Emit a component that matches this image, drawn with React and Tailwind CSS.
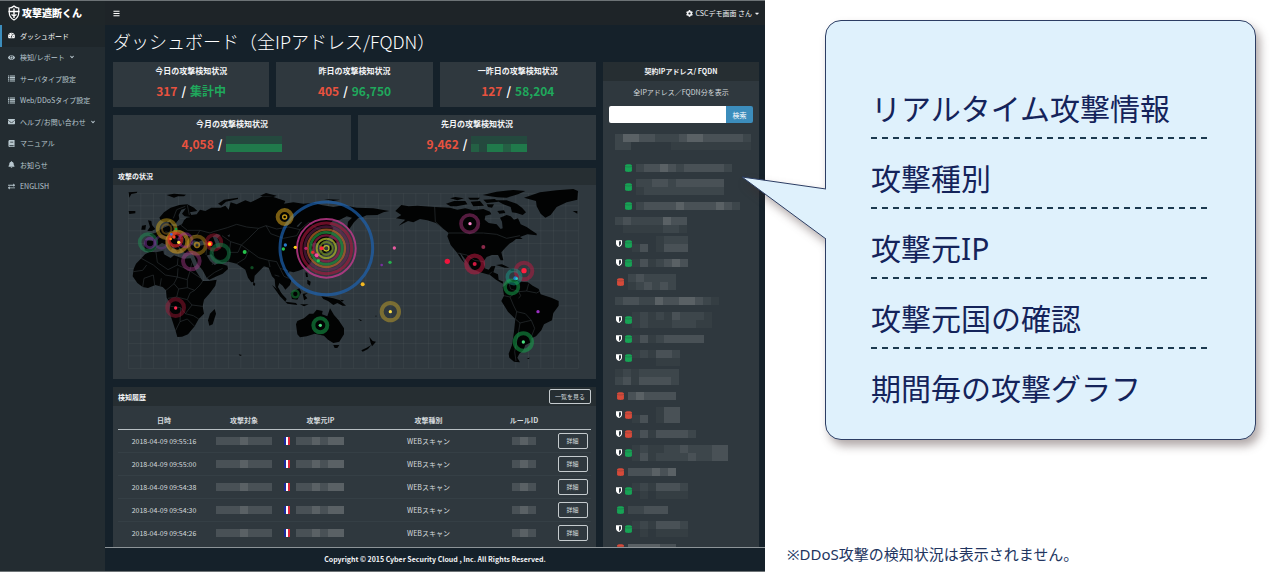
import React, { useState } from "react";
import {
  FaAngleDown,
  FaBars,
  FaBell,
  FaBook,
  FaCaretDown,
  FaCog,
  FaEnvelope,
  FaExchangeAlt,
  FaEye,
  FaTachometerAlt,
} from "react-icons/fa";

const ListIcon = ({ className }) => (
  <svg viewBox="0 0 16 14" className={className} fill="currentColor">
    <path d="M0 0h2.500v2.500H0z M4 0h12v2.500H4z M0 3.800h2.500v2.500H0z M4 3.800h12v2.500H4z M0 7.600h2.500v2.500H0z M4 7.600h12v2.500H4z M0 11.400h2.500v2.500H0z M4 11.400h12v2.500H4z" />
  </svg>
);

const DatabaseIcon = ({ className }) => (
  <svg viewBox="0 0 12 14" className={className} fill="currentColor">
    <path d="M0 2.200 C0 -0.400 12 -0.400 12 2.200 V11.800 C12 14.600 0 14.600 0 11.800 Z" />
    <path
      d="M0 4 C2 5.600 10 5.600 12 4"
      fill="none"
      stroke="#2f383e"
      strokeOpacity="0.500"
      strokeWidth="1"
    />
  </svg>
);

const ShieldIcon = ({ className }) => (
  <svg viewBox="0 0 12 14" className={className}>
    <path d="M0 0.500 H12 V7 C12 10.500 9 12.600 6 14 C3 12.600 0 10.500 0 7 Z" fill="#ffffff" />
    <path d="M6 2.500 H10 V7 C10 9 8.500 10.500 6 11.800 Z" fill="#2f383e" />
  </svg>
);

const menuItems = [
  { label: "ダッシュボード", icon: FaTachometerAlt, active: true },
  { label: "検知/レポート", icon: FaEye, sub: true },
  { label: "サーバタイプ設定", icon: ListIcon },
  { label: "Web/DDoSタイプ設定", icon: ListIcon },
  { label: "ヘルプ/お問い合わせ", icon: FaEnvelope, sub: true },
  { label: "マニュアル", icon: FaBook },
  { label: "お知らせ", icon: FaBell },
  { label: "ENGLISH", icon: FaExchangeAlt },
];

const dailyStats = [
  { title: "今日の攻撃検知状況", detected: "317", total: "集計中" },
  { title: "昨日の攻撃検知状況", detected: "405", total: "96,750" },
  { title: "一昨日の攻撃検知状況", detected: "127", total: "58,204" },
];

const monthlyStats = [
  { title: "今月の攻撃検知状況", detected: "4,058", masked: ["5555555", "6666666"] },
  { title: "先月の攻撃検知状況", detected: "9,462", masked: ["5555555", "7566766"] },
];

const history = [
  "2018-04-09 09:55:16",
  "2018-04-09 09:55:00",
  "2018-04-09 09:54:38",
  "2018-04-09 09:54:30",
  "2018-04-09 09:54:26",
];

// Masked server names. Every digit is one block, see blockColors
const servers = [
  { type: "indent", color: "green", rows: ["233432333332"] },
  { type: "indent", color: "green", rows: ["22332333333", "12222222222"] },
  { type: "indent", color: "green", rows: ["2333343333432"] },
  { type: "heading", rows: ["232222433", "011111221"] },
  { type: "shield", color: "green", rows: ["0001222", "1301333"] },
  { type: "shield", color: "green", rows: ["1312343"] },
  { type: "plain", color: "red", rows: ["232222", "123232"] },
  { type: "heading", rows: ["2332243344321"] },
  { type: "shield", color: "green", rows: ["1212132221", "1211122211"] },
  { type: "shield", color: "green", rows: ["131233333"] },
  { type: "shield", color: "green", rows: ["121332", "000111"] },
  { type: "heading", rows: ["12122222", "23133332"] },
  { type: "plain", color: "red", rows: ["343333"] },
  { type: "shield", color: "red", rows: ["000133", "130133"] },
  { type: "shield", color: "red", rows: ["13133332"] },
  { type: "shield", color: "green", rows: ["121122322233", "131222232233"] },
  { type: "plain", color: "red", rows: ["333434"] },
  { type: "shield", color: "green", rows: ["1213332", "0101111"] },
  { type: "plain", color: "green", rows: ["22333"] },
  { type: "shield", color: "green", rows: ["1213332", "0101111"] },
  { type: "plain", color: "red", rows: ["444433"] },
];

const features = [
  "リアルタイム攻撃情報",
  "攻撃種別",
  "攻撃元IP",
  "攻撃元国の確認",
  "期間毎の攻撃グラフ",
];

const blockColors = [
  "bg-transparent",
  "bg-[#353e43]",
  "bg-[#3d464b]",
  "bg-[#495156]",
  "bg-[#5a6165]",
  "bg-[#24493e]",
  "bg-[#207a4b]",
  "bg-[#246044]",
];

const Mosaic = ({ rows }) => (
  <span className="flex flex-col">
    {rows.map((row, i) => (
      <span key={i} className="flex">
        {row.split("").map((n, j) => (
          <span key={j} className={`h-2 w-2 ${blockColors[n]}`} />
        ))}
      </span>
    ))}
  </span>
);

const Logo = () => (
  <a href="#" className="flex h-6 items-center gap-0.5 bg-[#1f2629] pl-2 text-white">
    <svg viewBox="0 0 24 32" className="h-4 w-3" fill="none" stroke="currentColor">
      <path
        d="M12 2 C9 5 6 6 2.500 6 V15 C2.500 22 6 27 12 30 C18 27 21.500 22 21.500 15 V6 C18 6 15 5 12 2 Z"
        strokeWidth="2.400"
      />
      <path d="M12 7 V26 M1 13 H23 M7 19 L12 22 L17 19" strokeWidth="2.800" />
    </svg>
    <span className="text-[10px] leading-4 font-black whitespace-nowrap">攻撃遮断くん</span>
  </a>
);

const StatCard = ({ title, detected, total, masked }) => (
  <div className="flex-1 bg-[#2f383e] pt-0.5 pb-1.5 text-center font-bold">
    <h2 className="text-[8px] leading-[13px] text-gray-100">{title}</h2>
    <p className="mt-1 flex items-center justify-center gap-1 text-[12px] leading-5">
      <span className="text-[#e8523f]">{detected}</span>
      <span className="text-white">/</span>
      {masked ? <Mosaic rows={masked} /> : <span className="text-[#1fa85c]">{total}</span>}
    </p>
  </div>
);

const landShapes = [
  // Africa and Madagascar
  "M135 268 L150 260 L168 262 L190 257 L192 268 L212 279 L222 271 L250 281 L272 280 L277 293 L288 318 L302 340 L308 348 L326 348 L350 344 L346 362 L330 384 L312 404 L308 424 L312 446 L296 462 L284 484 L264 508 L246 515 L232 516 L227 498 L218 470 L208 440 L212 418 L200 398 L198 376 L188 366 L166 360 L144 369 L128 366 L112 354 L98 334 L101 312 L108 296 L124 280 Z",
  "M344 432 L348 446 L338 478 L328 482 L324 466 L330 446 Z",
  // Arabia
  "M280 268 L300 264 L318 268 L330 288 L344 300 L356 294 L382 302 L384 312 L368 326 L350 334 L328 344 L320 338 L308 316 L292 296 Z",
  // Eurasia
  "M134 226 L160 228 L160 216 L148 208 L166 204 L180 194 L196 186 L206 182 L206 170 L214 170 L214 182 L230 184 L246 178 L252 166 L260 158 L272 156 L254 154 L246 146 L258 130 L244 134 L236 150 L238 162 L226 178 L218 176 L210 164 L198 172 L184 168 L178 158 L192 142 L212 128 L238 120 L262 118 L282 128 L292 138 L270 142 L274 150 L290 148 L300 134 L316 138 L334 128 L362 128 L376 122 L386 134 L392 112 L410 118 L436 106 L452 112 L468 104 L488 94 L520 96 L556 108 L552 116 L580 112 L610 116 L640 113 L664 120 L700 126 L730 121 L770 128 L820 130 L868 138 L850 142 L832 150 L800 151 L788 156 L774 160 L762 172 L748 192 L742 186 L744 170 L756 158 L740 154 L720 164 L698 168 L688 178 L700 188 L694 208 L680 224 L668 232 L676 254 L668 260 L660 240 L646 232 L632 238 L640 248 L630 262 L640 276 L632 294 L618 308 L596 317 L580 322 L568 319 L564 330 L574 346 L570 360 L556 374 L548 362 L538 354 L534 366 L548 392 L538 386 L526 364 L524 342 L516 334 L506 308 L492 304 L478 318 L464 332 L462 350 L454 352 L444 338 L436 314 L424 306 L410 296 L386 290 L366 292 L346 282 L334 268 L318 272 L280 270 L278 264 L254 264 L244 252 L234 244 L240 258 L232 262 L222 246 L208 232 L218 250 L212 256 L200 240 L186 234 L172 242 L162 256 L146 260 L134 256 Z",
  // islands of the north
  "M144 166 L154 168 L156 180 L166 192 L156 198 L142 198 L150 186 Z",
  "M126 182 L138 180 L136 194 L124 194 Z",
  "M86 138 L106 138 L106 145 L88 147 Z",
  "M86 82 L112 80 L110 84 L94 87 L88 98 Z",
  "M200 90 L222 86 L258 89 L252 94 L234 94 L222 98 Z",
  "M354 116 L372 104 L414 98 L414 102 L378 110 L364 122 Z",
  "M480 92 L498 84 L530 92 L520 96 Z",
  "M672 102 L720 104 L700 108 Z",
  // Japan
  "M700 222 L716 228 L702 238 L696 232 Z",
  "M694 238 L696 254 L676 264 L660 270 L664 262 L684 254 Z",
  // south east asia
  "M516 360 L534 374 L560 402 L556 410 L540 394 Z",
  "M556 410 L588 414 L592 420 L562 416 Z",
  "M572 384 L598 370 L604 382 L592 404 L576 402 Z",
  "M608 386 L624 384 L614 390 L622 400 L612 406 Z",
  "M616 322 L622 324 L624 336 L618 336 Z M622 344 L632 350 L630 362 L622 356 Z",
  "M600 418 L626 418 L612 424 Z",
  "M664 394 L680 396 L700 400 L720 406 L738 422 L728 422 L712 414 L700 420 L684 408 L670 402 Z",
  "M460 350 L466 356 L464 363 L459 360 Z",
  // Australia
  "M588 478 L592 468 L612 460 L628 446 L640 446 L650 434 L668 438 L666 448 L682 454 L690 430 L702 450 L716 466 L732 490 L732 508 L718 530 L700 534 L684 524 L672 512 L644 506 L620 514 L600 517 L592 508 Z",
  "M700 540 L718 540 L712 549 L704 549 Z",
  "M416 568 L426 570 L420 573 Z",
];

const americaShapes = [
  "M166 138 L184 120 L206 124 L232 122 L284 126 L330 128 L352 134 L376 130 L400 136 L430 132 L450 140 L454 148 L436 152 L434 164 L446 174 L470 178 L482 192 L488 190 L486 170 L480 158 L500 150 L512 154 L522 164 L534 160 L542 178 L560 186 L574 196 L590 206 L590 211 L562 208 L540 216 L548 222 L528 222 L518 230 L508 236 L496 248 L484 262 L490 286 L482 286 L474 270 L456 270 L440 276 L430 290 L434 310 L446 314 L454 304 L466 303 L460 322 L474 328 L476 344 L490 350 L488 356 L468 344 L450 330 L420 322 L396 312 L384 294 L364 268 L358 262 L374 294 L366 286 L350 262 L332 240 L322 214 L326 204 L308 190 L288 174 L262 166 L240 162 L220 172 L204 168 L176 182 L196 164 L168 160 L184 150 Z",
  "M428 90 L470 80 L520 75 L556 78 L534 88 L500 98 L472 97 L450 94 Z",
  "M552 98 L600 82 L650 76 L700 72 L714 78 L712 104 L680 112 L650 126 L632 150 L616 158 L602 146 L590 124 L588 108 Z",
  "M468 106 L500 106 L530 116 L546 128 L558 142 L548 150 L530 144 L516 142 L512 126 L490 118 Z",
  "M330 100 L346 96 L372 100 L352 106 Z",
  "M318 116 L342 108 L376 108 L382 118 L350 124 L332 124 Z",
  "M384 98 L420 98 L414 104 L390 104 Z",
  "M392 110 L420 108 L432 122 L400 124 Z",
  "M430 104 L464 102 L476 110 L440 114 Z",
  "M440 118 L462 118 L456 128 L444 126 Z",
  "M472 138 L492 136 L496 144 L478 146 Z",
  "M698 138 L712 138 L712 146 Z",
  "M468 300 L486 298 L508 308 L494 308 Z M512 312 L530 314 L528 319 L512 317 Z",
  // South America
  "M488 366 L494 362 L506 350 L524 343 L540 350 L564 352 L578 362 L596 372 L602 388 L634 398 L656 408 L656 422 L640 444 L636 466 L612 478 L604 496 L588 514 L574 520 L574 532 L556 540 L550 556 L538 566 L532 578 L540 592 L522 590 L508 578 L506 566 L516 540 L522 500 L526 462 L504 440 L484 408 L492 392 Z",
  "M560 580 L570 578 L566 582 Z",
  // New Zealand and small islands
  "M88 516 L98 528 L108 530 L96 544 L92 534 Z M94 540 L84 552 L68 560 L64 556 L80 548 Z",
  "M54 462 L66 466 L62 468 Z M0 404 L12 406 L6 410 Z M106 452 L110 452 L108 456 Z",
];

const seaShapes = [
  "M272 236 L282 226 L296 230 L306 226 L322 238 L300 242 L280 242 Z",
  "M338 214 L350 206 L362 210 L352 220 L358 232 L362 250 L350 250 L346 234 Z",
  "M226 178 L236 164 L242 166 L250 168 L244 178 L232 184 Z",
  "M382 212 L390 208 L388 216 Z",
  "M590 184 L604 170 L606 172 L594 186 Z",
];

const borders =
  "M124 280 L160 300 L196 330 L232 336 M168 262 L172 292 L204 314 L232 300 L234 280 M232 300 L270 316 L276 292 M232 336 L234 310 M128 366 L132 340 L160 330 L164 360 M100 320 L128 316 L140 300 M180 364 L184 340 M198 376 L222 356 L232 336 L262 344 L270 318 L300 338 M222 356 L236 372 L262 368 L262 344 M262 368 L284 376 L300 360 L308 348 M236 372 L230 396 L204 400 M230 396 L262 404 L270 384 L284 376 M262 404 L276 420 L308 424 M212 424 L242 428 L256 446 L276 420 M242 428 L240 470 L226 498 M240 470 L262 462 L284 484 M256 446 L280 452 L296 462 M382 188 L410 178 L440 186 L476 190 L498 182 L530 192 L566 186 L600 194 L626 172 L650 190 L690 206 M498 182 L512 206 L550 220 L590 212 L600 194 M300 196 L330 204 L340 200 L382 188 M366 212 L392 230 L424 240 L446 220 L476 190 M392 230 L388 262 L414 262 L424 240 L446 256 L436 280 L410 296 M388 262 L386 290 M446 256 L476 278 L506 286 L530 290 M506 286 L510 306 M530 290 L540 310 L566 318 M540 310 L552 334 L566 340 M524 330 L538 334 M242 180 L262 196 L300 196 L290 212 L260 212 L242 198 M196 200 L216 206 L242 198 M216 206 L222 222 L250 220 L260 212 M250 220 L252 240 M328 244 L340 268 M320 250 L318 270 M262 120 L268 150 M220 160 L230 134 L256 124 M320 340 L344 322 L368 310 M346 282 L336 300";

const americaBorders =
  "M326 204 L430 204 L470 208 L500 220 L540 212 M284 126 L286 170 L308 190 M352 264 L380 270 L404 286 L430 290 M446 330 L456 320 M506 352 L512 372 L536 380 L542 392 L536 400 M536 380 L560 378 L566 356 M560 378 L590 384 L600 378 M492 392 L510 396 L520 388 M510 396 L520 420 L530 440 L526 462 M530 440 L556 446 L574 466 L584 490 L572 520 M526 462 L540 474 L556 470 L574 466 M540 474 L534 510 L524 560 L528 588";

const rings = [
  { x: 679, y: 250, r: 139, w: 9, color: "#1d62b0", o: 0.7 },
  { x: 679, y: 250, r: 88, w: 6, color: "#c43b8f", o: 0.8 },
  { x: 679, y: 250, r: 76, w: 9, color: "#b31540", o: 0.6 },
  { x: 679, y: 250, r: 65, w: 8, color: "#7a235a", o: 0.5 },
  { x: 679, y: 250, r: 56, w: 7, color: "#b4602a", o: 0.75 },
  { x: 679, y: 250, r: 48, w: 8, color: "#1f8a3b", o: 0.75 },
  { x: 679, y: 250, r: 39, w: 7, color: "#98204a", o: 0.7 },
  { x: 679, y: 250, r: 29, w: 6, color: "#9aa52a", o: 0.85 },
  { x: 679, y: 250, r: 19, w: 6, color: "#6e8a20", o: 0.8 },
  { x: 679, y: 250, r: 8, w: 4, color: "#c8c92e", o: 0.9 },
  { x: 554, y: 156, r: 21, w: 12, color: "#c99a1c", o: 0.6 },
  { x: 554, y: 156, r: 6, w: 4, color: "#d9a81c", o: 0.9 },
  { x: 144, y: 232, r: 25, w: 11, color: "#1e9a57", o: 0.45 },
  { x: 150, y: 234, r: 14, w: 9, color: "#7d35a0", o: 0.5 },
  { x: 184, y: 232, r: 18, w: 8, color: "#7d35a0", o: 0.35 },
  { x: 200, y: 192, r: 27, w: 11, color: "#c9a21c", o: 0.5 },
  { x: 200, y: 192, r: 14, w: 6, color: "#9a701c", o: 0.5 },
  { x: 232, y: 230, r: 30, w: 12, color: "#d09a22", o: 0.6 },
  { x: 226, y: 224, r: 19, w: 10, color: "#e02828", o: 0.65 },
  { x: 256, y: 226, r: 20, w: 8, color: "#b532b5", o: 0.4 },
  { x: 291, y: 240, r: 26, w: 11, color: "#c9981c", o: 0.45 },
  { x: 291, y: 240, r: 7, w: 5, color: "#c9981c", o: 0.7 },
  { x: 342, y: 232, r: 22, w: 11, color: "#b01832", o: 0.45 },
  { x: 361, y: 265, r: 26, w: 12, color: "#147a45", o: 0.55 },
  { x: 274, y: 288, r: 25, w: 12, color: "#a83a8c", o: 0.45 },
  { x: 227, y: 428, r: 25, w: 12, color: "#a81838", o: 0.45 },
  { x: 586, y: 387, r: 10, w: 7, color: "#147a32", o: 0.6 },
  { x: 661, y: 481, r: 21, w: 12, color: "#16a34a", o: 0.55 },
  { x: 871, y: 440, r: 26, w: 12, color: "#b8992a", o: 0.55 },
  { x: 1109, y: 176, r: 26, w: 11, color: "#a8347c", o: 0.5 },
  { x: 1124, y: 297, r: 25, w: 13, color: "#c01840", o: 0.55 },
  { x: 1272, y: 318, r: 25, w: 12, color: "#c01840", o: 0.5 },
  { x: 1242, y: 336, r: 20, w: 11, color: "#159a8a", o: 0.5 },
  { x: 1235, y: 366, r: 20, w: 11, color: "#16a34a", o: 0.55 },
  { x: 1270, y: 531, r: 26, w: 12, color: "#16a34a", o: 0.55 },
];

const dots = [
  [236, 232, 5, "#ffe14a"],
  [222, 216, 5, "#ff3b2a"],
  [214, 208, 4, "#3a6ae0"],
  [228, 192, 4, "#1f9a3c"],
  [212, 222, 4, "#ff8a1a"],
  [330, 236, 8, "#ff2a2a"],
  [329, 237, 5, "#ffd21a"],
  [434, 261, 6, "#27c24c"],
  [456, 308, 5, "#0f4a22"],
  [550, 252, 5, "#27c24c"],
  [556, 240, 5, "#2a7ac9"],
  [586, 247, 5, "#ffd21a"],
  [618, 250, 5, "#c0206a"],
  [665, 250, 6, "#ff2a3a"],
  [650, 271, 6, "#f050a0"],
  [655, 287, 5, "#27c24c"],
  [638, 262, 5, "#e03030"],
  [227, 429, 5, "#ff2a50"],
  [661, 481, 5, "#4ade80"],
  [788, 358, 6, "#f5b921"],
  [845, 300, 4, "#7a2fa0"],
  [870, 292, 5, "#27b24c"],
  [883, 249, 5, "#e85aa0"],
  [871, 440, 5, "#ffe14a"],
  [1042, 289, 8, "#f0143c"],
  [1110, 176, 5, "#ff8ad0"],
  [1150, 246, 6, "#8a2a4a"],
  [1124, 297, 6, "#d01840"],
  [1272, 317, 8, "#ff1f3f"],
  [1246, 340, 6, "#1f7ac9"],
  [1250, 341, 4, "#2ad0c0"],
  [1314, 440, 5, "#9a2fc0"],
  [1270, 531, 5, "#4ade80"],
];

const AttackMap = () => (
  <svg viewBox="39 60 1449 582" className="block w-full" role="img" aria-label="攻撃の状況">
    <g stroke="#ffffff" strokeOpacity="0.045" strokeWidth="3">
      {Array.from({ length: 37 }, (_, i) => (
        <line key={i} x1={85 + i * 37.5} x2={85 + i * 37.5} y1="85" y2="610" />
      ))}
      {Array.from({ length: 15 }, (_, i) => (
        <line key={i} x1="85" x2="1435" y1={85 + i * 37.5} y2={85 + i * 37.5} />
      ))}
    </g>
    <g fill="#020303">
      {landShapes.map((d, i) => (
        <path key={i} d={d} />
      ))}
    </g>
    <g fill="#2f383e">
      {seaShapes.map((d, i) => (
        <path key={i} d={d} />
      ))}
    </g>
    <path d={borders} fill="none" stroke="#2b3033" strokeWidth="2" />
    <g transform="translate(720 0)">
      <g fill="#020303">
        {americaShapes.map((d, i) => (
          <path key={i} d={d} />
        ))}
      </g>
      <path d={americaBorders} fill="none" stroke="#2b3033" strokeWidth="2" />
    </g>
    {rings.map((ring, i) => (
      <circle
        key={i}
        cx={ring.x}
        cy={ring.y}
        r={ring.r}
        fill="none"
        stroke={ring.color}
        strokeWidth={ring.w}
        strokeOpacity={ring.o}
      />
    ))}
    {dots.map(([x, y, r, color], i) => (
      <circle key={i} cx={x} cy={y} r={r} fill={color} />
    ))}
  </svg>
);

const FranceFlag = () => (
  <span className="flex h-2 w-1.5">
    <span className="w-0.5 bg-[#1a2a9c]" />
    <span className="w-0.5 bg-white" />
    <span className="w-0.5 bg-[#e0253a]" />
  </span>
);

const HistoryTable = () => (
  <table className="w-full table-fixed border-collapse text-center text-[7px] leading-3">
    <thead>
      <tr className="h-[23px] border-b border-[#b8bfc3] align-bottom font-bold">
        <th className="w-[92px] pb-[3px]">日時</th>
        <th className="w-[68px] pb-[3px]">攻撃対象</th>
        <th className="w-[85px] pb-[3px]">攻撃元IP</th>
        <th className="pb-[3px]">攻撃種別</th>
        <th className="w-[60px] pb-[3px]">ルールID</th>
        <th className="w-[37px]" aria-label="詳細" />
      </tr>
    </thead>
    <tbody>
      {history.map((time) => (
        <tr key={time} className="h-[23px] border-b border-[#353f45] last:border-b-0">
          <td>{time}</td>
          <td>
            <div className="flex justify-center">
              <Mosaic rows={["3334333"]} />
            </div>
          </td>
          <td>
            <div className="flex items-center gap-1.5 pl-1.5">
              <FranceFlag />
              <Mosaic rows={["334344"]} />
            </div>
          </td>
          <td>WEBスキャン</td>
          <td>
            <div className="flex justify-center">
              <Mosaic rows={["343"]} />
            </div>
          </td>
          <td>
            <button className="h-4 w-[30px] rounded-xs border border-[#c5cbce] text-[6px] leading-3">
              詳細
            </button>
          </td>
        </tr>
      ))}
    </tbody>
  </table>
);

const ServerRow = ({ type, color, rows }) => {
  const iconColor = color === "red" ? "text-[#d64a3a]" : "text-[#17a355]";

  if (type === "heading") {
    return (
      <li className="flex h-[19px] items-center pl-3">
        <Mosaic rows={rows} />
      </li>
    );
  }

  return (
    <li
      className={`flex h-[19px] items-center ${
        type === "indent" ? "gap-1 pl-[22px]" : type === "plain" ? "gap-1 pl-[14px]" : "pl-[13px]"
      }`}
    >
      {type === "shield" && <ShieldIcon className="mr-[3px] h-[7px] w-1.5 shrink-0" />}
      <DatabaseIcon className={`h-2 w-[7px] shrink-0 ${iconColor}`} />
      <Mosaic rows={rows} />
    </li>
  );
};

const ServerPanel = () => {
  const [keyword, setKeyword] = useState("");

  return (
    <aside className="contain-size overflow-hidden bg-[#2f383e]">
      <h2 className="bg-[#262e32] text-center text-[7px] leading-[19px] font-bold text-gray-100">
        契約IPアドレス/ FQDN
      </h2>
      <label htmlFor="keyword" className="mt-1 block text-center text-[7px] leading-[15px]">
        全IPアドレス／FQDN分を表示
      </label>
      <form className="mx-1.5 mt-1.5 flex h-[17px]" onSubmit={(e) => e.preventDefault()}>
        <input
          id="keyword"
          type="text"
          value={keyword}
          onChange={(e) => setKeyword(e.target.value)}
          className="min-w-0 flex-1 rounded-l-xs bg-white px-1 text-[7px] text-gray-800 outline-none"
        />
        <button className="w-[27px] rounded-r-xs bg-[#3c8dbc] text-[7px] leading-3 text-white">
          検索
        </button>
      </form>
      <ul className="pt-[11px]">
        <li className="mb-2 pl-3">
          <Mosaic rows={["24433222344333332", "22000001111111111"]} />
        </li>
        {servers.map((server, i) => (
          <ServerRow key={i} {...server} />
        ))}
      </ul>
    </aside>
  );
};

const Sidebar = () => (
  <div className="w-[105px] shrink-0 bg-[#232c31]">
    <Logo />
    <nav className="flex h-[172px] flex-col">
      {menuItems.map(({ label, icon: Icon, active, sub }) => (
        <a
          key={label}
          href="#"
          className={`flex flex-1 items-center border-l-2 pl-1.5 text-[7px] leading-3 whitespace-nowrap ${
            active
              ? "border-[#3c8dbc] bg-[#1e262a] text-white"
              : "border-transparent text-[#b8c7ce]"
          }`}
        >
          <Icon className="mr-[5px] size-[7px] shrink-0" />
          {label}
          {sub && <FaAngleDown className="ml-1 size-1.5" />}
        </a>
      ))}
    </nav>
  </div>
);

const Dashboard = () => (
  <div className="min-w-0 border-y border-[#6d7376] bg-[#15212a] font-['Noto_Sans_CJK_JP',sans-serif] text-[#d5dadd]">
    <div className="flex">
      <Sidebar />
      <div className="min-w-0 flex-1">
        <header className="flex h-6 items-center justify-between bg-[#1e2428] pr-1.5 pl-2">
          <button aria-label="メニュー">
            <FaBars className="size-[7px] text-white" />
          </button>
          <button className="flex items-center gap-[3px] text-[7px] leading-3 text-gray-100">
            <FaCog className="size-[7px]" />
            CSCデモ画面 さん
            <FaCaretDown className="h-[7px] w-1" />
          </button>
        </header>

        <main className="pr-1.5 pl-2">
          <h1 className="mb-2 pt-[3px] text-[18px] leading-[26px] font-light whitespace-nowrap text-white">
            ダッシュボード（全IPアドレス/FQDN）
          </h1>
          <div className="grid grid-cols-[minmax(0,483fr)_minmax(0,156fr)] gap-[7px]">
            <div className="flex flex-col gap-2">
              <div className="flex gap-[7px]">
                {dailyStats.map((stat) => (
                  <StatCard key={stat.title} {...stat} />
                ))}
              </div>
              <div className="flex gap-[7px]">
                {monthlyStats.map((stat) => (
                  <StatCard key={stat.title} {...stat} />
                ))}
              </div>

              <section className="bg-[#2f383e]">
                <h2 className="bg-[#262e32] pl-[5px] text-[7px] leading-[17px] font-bold text-gray-100">
                  攻撃の状況
                </h2>
                <AttackMap />
              </section>

              <section className="bg-[#2f383e] pb-[3px]">
                <div className="flex h-[19px] items-center justify-between bg-[#262e32] px-[5px]">
                  <h2 className="text-[7px] leading-3 font-bold text-gray-100">検知履歴</h2>
                  <button className="h-[15px] w-[42px] rounded-xs border border-[#c5cbce] text-[6px] leading-3">
                    一覧を見る
                  </button>
                </div>
                <div className="px-[5px]">
                  <HistoryTable />
                </div>
              </section>
            </div>
            <ServerPanel />
          </div>
        </main>

        <footer className="border-t border-[#8d9498] text-center text-[7px] leading-[23px] font-bold text-gray-100">
          Copyright © 2015 Cyber Security Cloud , Inc. All Rights Reserved.
        </footer>
      </div>
    </div>
  </div>
);

const Callout = () => (
  <div className="relative mt-5 mr-6 ml-[60px] rounded-2xl border border-[#2c3d63] bg-[#dff1fc] px-[45px] pt-12 pb-[30px] drop-shadow-[4px_6px_5px_rgba(60,40,40,0.4)]">
    {/* pointer towards the server list */}
    <svg
      viewBox="0 0 86 66"
      className="absolute top-[155px] -left-[85px] h-[66px] w-[86px]"
      fill="#dff1fc"
    >
      <path d="M86 13 L1 1 L86 64 Z" />
      <path d="M85 13 L1 1 L85 63" fill="none" stroke="#2c3d63" strokeWidth="1" />
    </svg>
    <ul className="text-[30px] leading-10 font-normal text-[#14235a]">
      {features.map((feature, i) => (
        <li key={feature} className="pt-5">
          <p>{feature}</p>
          {i < features.length - 1 && (
            <div className="mt-2 h-0.5 bg-[repeating-linear-gradient(90deg,#1c3a50_0_6px,transparent_6px_11px)]" />
          )}
        </li>
      ))}
    </ul>
  </div>
);

const App = () => (
  <div className="grid min-h-screen grid-cols-[765fr_515fr] items-start bg-white">
    <Dashboard />
    <div className="min-w-0 font-['Noto_Sans','Noto_Sans_CJK_JP',sans-serif]">
      <Callout />
      <p className="mt-[104px] pl-[22px] text-[15px] leading-5 text-[#22355f]">
        ※DDoS攻撃の検知状況は表示されません。
      </p>
    </div>
  </div>
);

export default App;
